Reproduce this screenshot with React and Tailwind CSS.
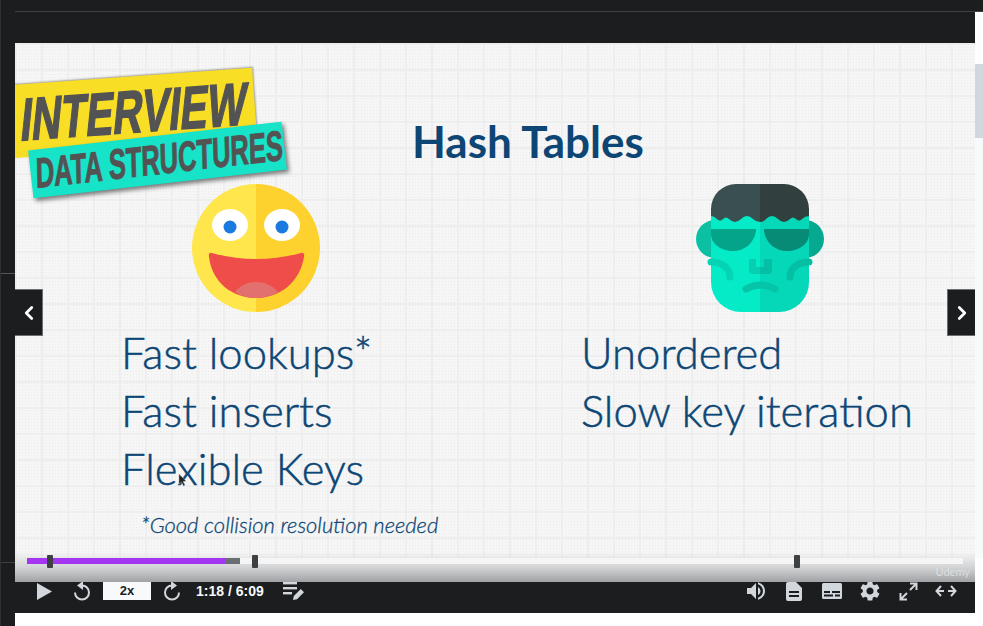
import React from 'react';
import { ChevronLeft, ChevronRight } from 'lucide-react';
import { MdVolumeUp, MdSettings } from 'react-icons/md';

const Smiley = () => (
  <svg width="128" height="128" viewBox="0 0 128 128">
    <path d="M64 0A64 64 0 0 0 64 128Z" fill="#ffe64d" />
    <path d="M64 0A64 64 0 0 1 64 128Z" fill="#fdd22f" />
    <ellipse cx="38" cy="41" rx="18" ry="16" fill="#fff" />
    <ellipse cx="90" cy="41" rx="18" ry="16" fill="#fff" />
    <circle cx="38" cy="43" r="6.5" fill="#1a7ae0" />
    <circle cx="90" cy="43" r="6.5" fill="#1a7ae0" />
    <path d="M20 69Q64 81 109 69Q113 68 112 73C108 98 88 114 64 114C40 114 20 98 17 73Q16 68 20 69Z" fill="#ef4d4a" />
    <path d="M43 108C48 101 56 98 64 98C72 98 80 101 86 108C79 112 72 114 64 114C56 114 49 112 43 108Z" fill="#e2706f" />
  </svg>
);

const Monster = () => (
  <svg width="128" height="128" viewBox="0 0 128 128">
    <path d="M19 36A19 19 0 0 0 19 74H30V36Z" fill="#0cc0a4" />
    <path d="M109 36A19 19 0 0 1 109 74H98V36Z" fill="#04a98f" />
    <path d="M15 30H64V128H45A30 30 0 0 1 15 98Z" fill="#05ebc8" />
    <path d="M64 30H113V98A30 30 0 0 1 83 128H64Z" fill="#05d8b8" />
    <path d="M15 32V25A25 25 0 0 1 40 0H64V38Q60 38 57 35Q54 32 51 32Q48 32 45 35Q42 38 39 38Q36 38 33 35Q30 32 27 35Q24 38 21 35Q18 32 15 32Z" fill="#3a4f50" />
    <path d="M113 32V25A25 25 0 0 0 88 0H64V38Q68 38 70 35Q73 32 76 32Q79 32 82 35Q85 38 88 38Q91 38 94 35Q97 32 100 35Q103 38 106 35Q109 32 113 32Z" fill="#313f3e" />
    <path d="M15 45H60V47C58 60 48 67 37 67C25 67 15 60 15 50Z" fill="#04a48b" />
    <path d="M68 45H113V50C113 60 103 67 91 67C80 67 70 60 68 47Z" fill="#078a76" />
    <path d="M15 78C26 78 34 84 34 93" fill="none" stroke="#05d4b4" strokeWidth="7" strokeLinecap="round" />
    <path d="M113 78C102 78 94 84 94 93" fill="none" stroke="#04bfa3" strokeWidth="7" strokeLinecap="round" />
    <path d="M53 75H60V83H64V90H57Q53 90 53 86Z" fill="#05cfb0" />
    <path d="M64 83H68V75H76V86Q76 90 72 90H64Z" fill="#04bfa3" />
    <path d="M50 105Q64 97 79 105" fill="none" stroke="#05c4a7" strokeWidth="7" strokeLinecap="round" />
  </svg>
);

const RewindIcon = ({ className }) => (
  <svg className={className} width="18" height="20" viewBox="0 0 18 20" fill="none">
    <path d="M9 4.5A7 7 0 1 1 2 11.5" stroke="#d1d7dc" strokeWidth="2" />
    <path d="M10 0L4 4.5L10 9Z" fill="#d1d7dc" />
  </svg>
);

const ForwardIcon = ({ className }) => (
  <svg className={className} width="18" height="20" viewBox="0 0 18 20" fill="none">
    <path d="M9 4.5A7 7 0 1 0 16 11.5" stroke="#d1d7dc" strokeWidth="2" />
    <path d="M8 0L14 4.5L8 9Z" fill="#d1d7dc" />
  </svg>
);

const NotesIcon = () => (
  <svg width="22" height="20" viewBox="0 0 22 20" fill="#d1d7dc">
    <rect x="0" y="1" width="14" height="2.4" />
    <rect x="0" y="6" width="14" height="2.4" />
    <rect x="0" y="11" width="9" height="2.4" />
    <path d="M10 19l.8-4 7-7 3.2 3.2-7 7z" />
  </svg>
);

const FileIcon = () => (
  <svg width="16" height="19" viewBox="0 0 16 19">
    <path d="M2 0H10L16 6V17Q16 19 14 19H2Q0 19 0 17V2Q0 0 2 0Z" fill="#d1d7dc" />
    <rect x="3" y="9" width="10" height="2" fill="#1c1d1f" />
    <rect x="3" y="13" width="10" height="2" fill="#1c1d1f" />
  </svg>
);

const CaptionsIcon = () => (
  <svg width="20" height="16" viewBox="0 0 20 16">
    <rect width="20" height="16" rx="1.5" fill="#d1d7dc" />
    <rect x="2" y="8" width="6" height="2" fill="#1c1d1f" />
    <rect x="10" y="8" width="8" height="2" fill="#1c1d1f" />
    <rect x="2" y="11.5" width="9" height="2" fill="#1c1d1f" />
    <rect x="13" y="11.5" width="5" height="2" fill="#1c1d1f" />
  </svg>
);

const ExpandIcon = () => (
  <svg width="19" height="19" viewBox="0 0 19 19" fill="none" stroke="#d1d7dc" strokeWidth="2">
    <path d="M11 1.5H17.5V8M17 2L11 8" />
    <path d="M8 17.5H1.5V11M2 17L8 11" />
  </svg>
);

const WideIcon = () => (
  <svg width="22" height="12" viewBox="0 0 22 12" fill="none" stroke="#d1d7dc" strokeWidth="2">
    <path d="M6 1L1.5 6L6 11M1.5 6H9" />
    <path d="M16 1L20.5 6L16 11M20.5 6H13" />
  </svg>
);

const Marker = ({ className }) => (
  <div className={`absolute top-[-3px] w-[6px] h-[13px] bg-[#3e4143] rounded-[1px] ${className}`}></div>
);

export default function App() {
  return (
    <div className="w-[983px] h-[626px] flex overflow-hidden bg-white font-['Lato',sans-serif]">
      <div className="w-[15px] h-full bg-[#1c1d1f] border-l border-[#2d2f31] relative">
        <div className="absolute left-0 right-0 top-[273px] h-[1px] bg-[#555]"></div>
        <div className="absolute left-0 right-0 top-[562px] h-[1px] bg-[#3e4143]"></div>
      </div>

      <div className="w-[960px] flex flex-col">
        <div className="h-[12px] bg-[#1c1d1f] border-b border-[#3e4143]"></div>
        <div className="h-[31px] bg-[#1c1d1f]"></div>

        <div className="h-[539px] relative overflow-hidden bg-[#f6f6f6] bg-[linear-gradient(to_right,#eeeeee_2px,transparent_2px),linear-gradient(to_bottom,#eeeeee_2px,transparent_2px),radial-gradient(#ebebeb_0.9px,transparent_1px)] bg-[size:26px_26px,26px_26px,3px_3px]">
          <h1 className="pt-[70px] pl-[397px] text-[44px] leading-[56px] font-bold text-[#0d4675]">Hash Tables</h1>

          <div className="flex mt-[15px]">
            <div className="w-[566px] pl-[106px]">
              <div className="ml-[71px]"><Smiley /></div>
              <div className="mt-[11px] text-[43.6px] leading-[58px] font-light text-[#0d4675] [-webkit-text-stroke:0.5px_#0d4675]">
                <p>Fast lookups*</p>
                <p>Fast inserts</p>
                <p>Flexible Keys</p>
              </div>
              <p className="mt-[11px] ml-[20px] text-[22px] italic font-light text-[#0d4675] [-webkit-text-stroke:0.3px_#0d4675]">*Good collision resolution needed</p>
            </div>
            <div>
              <div className="ml-[115px]"><Monster /></div>
              <div className="mt-[11px] text-[43.6px] leading-[58px] font-light text-[#0d4675] [-webkit-text-stroke:0.5px_#0d4675]">
                <p>Unordered</p>
                <p>Slow key iteration</p>
              </div>
            </div>
          </div>

          <div className="absolute left-[-20px] top-[34px] w-[260px] h-[73px] bg-[#f9de26] -rotate-[4.1deg] shadow-[1px_-1px_2px_rgba(0,0,0,0.35)]">
            <span className="absolute left-[26px] top-[4px] origin-left whitespace-nowrap font-['Liberation_Sans',sans-serif] font-bold text-[60px] leading-[64px] text-[#535353] [-webkit-text-stroke:1.5px_#535353] [transform:skewX(-10deg)_scaleX(.68)]">INTERVIEW</span>
          </div>
          <div className="absolute left-[15px] top-[93px] w-[255px] h-[48px] bg-[#17e3c8] -rotate-[6.5deg] shadow-[2px_3px_4px_rgba(0,0,0,0.5)]">
            <span className="absolute left-[5px] top-[0px] origin-left whitespace-nowrap font-['Liberation_Sans',sans-serif] font-bold text-[42px] leading-[48px] text-[#535353] [-webkit-text-stroke:1px_#535353] [transform:skewX(-5deg)_scaleX(.61)]">DATA STRUCTURES</span>
          </div>

          <svg className="absolute left-[163px] top-[431px]" width="9" height="13" viewBox="0 0 9 13">
            <path d="M1 0L1 10L3.5 8L5.5 12L7 11L5 7.5L8 7Z" fill="#222" stroke="#aaa" strokeWidth="0.5" />
          </svg>

          <button className="absolute left-0 top-[246px] w-[28px] h-[47px] bg-[#1c1d1f] border border-l-0 border-[#6a6f73] flex items-center justify-center">
            <ChevronLeft size={22} strokeWidth={3} color="#fff" />
          </button>
          <button className="absolute right-0 top-[246px] w-[28px] h-[47px] bg-[#1c1d1f] border border-r-0 border-[#6a6f73] flex items-center justify-center">
            <ChevronRight size={22} strokeWidth={3} color="#fff" />
          </button>

          <div className="absolute left-0 right-0 bottom-0 h-[30px] bg-gradient-to-b from-transparent via-[#d4d5d6] to-[#a0a2a5]"></div>
          <div className="absolute left-[12px] top-[515px] w-[936px] h-[6px] bg-[#f5f5f5]">
            <div className="absolute left-0 top-0 h-full w-[213px] bg-[#6a6f73]"></div>
            <div className="absolute left-0 top-0 h-full w-[198px] bg-[#a435f0]"></div>
            <Marker className="left-[20px]" />
            <Marker className="left-[225px]" />
            <Marker className="left-[767px]" />
          </div>
          <span className="absolute right-[5px] bottom-[3px] text-[11px] leading-[14px] text-[#dedfe0]">Ûdemy</span>
        </div>

        <div className="h-[31px] bg-[#1c1d1f]">
          <div className="h-[18px] flex items-center text-[#d1d7dc]">
            <svg className="ml-[22px]" width="15" height="17" viewBox="0 0 15 17"><path d="M0 0L15 8.5L0 17Z" fill="#d1d7dc" /></svg>
            <RewindIcon className="ml-[21px]" />
            <div className="ml-[12px] w-[48px] h-[18px] bg-[#f7f9fa] text-[#1c1d1f] text-[13px] font-bold font-['Liberation_Sans',sans-serif] leading-[18px] text-center">2x</div>
            <ForwardIcon className="ml-[12px]" />
            <span className="ml-[15px] text-[14px] font-bold font-['Liberation_Sans',sans-serif] text-[#f7f9fa] whitespace-nowrap">1:18 / 6:09</span>
            <div className="ml-[19px]"><NotesIcon /></div>
            <div className="ml-auto flex items-center pr-[18px]">
              <MdVolumeUp size={24} />
              <div className="ml-[18px]"><FileIcon /></div>
              <div className="ml-[20px]"><CaptionsIcon /></div>
              <div className="ml-[16px]"><MdSettings size={24} /></div>
              <div className="ml-[17px]"><ExpandIcon /></div>
              <div className="ml-[17px]"><WideIcon /></div>
            </div>
          </div>
        </div>
        <div className="flex-1 bg-white"></div>
      </div>

      <div className="w-[8px] flex flex-col bg-white">
        <div className="h-[12px] bg-[#1c1d1f] border-b border-[#3e4143]"></div>
        <div className="h-[53px] bg-white border-b border-[#d1d7dc]"></div>
        <div className="h-[73px] bg-[#d1d7dc]"></div>
        <div className="h-[420px] bg-[#f7f9fa]"></div>
      </div>
    </div>
  );
}
